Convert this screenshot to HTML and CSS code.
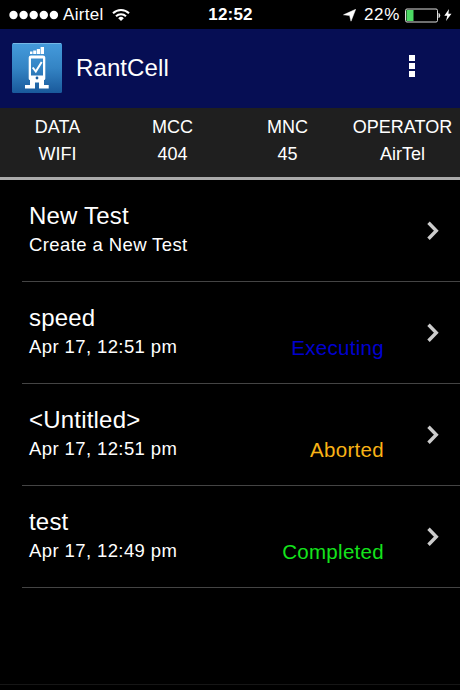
FILE: index.html
```html
<!DOCTYPE html>
<html>
<head>
    <meta charset="utf-8">
    <title>RantCell</title>
    <link rel="stylesheet" href="styles.css">
</head>
<body>
    <div class="status-bar">
        <div class="carrier">
            <svg class="dots" width="50" height="10" viewBox="0 0 50 10" fill="#fff">
                <circle cx="4.5" cy="5" r="4.2"/>
                <circle cx="14.6" cy="5" r="4.2"/>
                <circle cx="24.7" cy="5" r="4.2"/>
                <circle cx="34.8" cy="5" r="4.2"/>
                <circle cx="44.9" cy="5" r="4.2"/>
            </svg>
            <span class="network">Airtel</span>
            <svg class="wifi" width="18" height="14" viewBox="0 0 18 14" fill="none" stroke="#fff" stroke-width="2">
                <path d="M1 5.2a11.3 11.3 0 0 1 16 0"/>
                <path d="M4 8.3a7 7 0 0 1 10 0"/>
                <path d="M9 13L6.2 10.2a4 4 0 0 1 5.6 0z" fill="#fff" stroke="none"/>
            </svg>
        </div>
        <div class="clock">12:52</div>
        <div class="power">
            <svg width="13" height="13" viewBox="0 0 13 13" fill="#fff">
                <path d="M12.7 0.3L8 12.2L6.6 6.6L0.5 5.8z" stroke="#fff" stroke-width="0.5"/>
            </svg>
            <span class="percent">22%</span>
            <svg class="battery" width="36" height="15" viewBox="0 0 36 15">
                <rect x="0.5" y="1" width="32" height="13" rx="1.5" fill="none" stroke="#ddd"/>
                <rect x="1.5" y="2" width="7" height="11" fill="#4cd964"/>
                <path d="M33.5 5h.5q1.2 .8 1.2 2.5t-1.2 2.5h-.5z" fill="#ddd"/>
            </svg>
            <svg class="bolt" width="8" height="12" viewBox="0 0 8 12" fill="#fff">
                <path d="M5 0L0.3 6.8H3.3L2 12L7.5 4.8H4.4z"/>
            </svg>
        </div>
    </div>

    <div class="header">
        <svg class="logo" width="50" height="50" viewBox="0 0 50 50">
            <defs>
                <linearGradient id="sky" x1="0" y1="0" x2="0" y2="1">
                    <stop offset="0" stop-color="#459bdc"/>
                    <stop offset="0.5" stop-color="#3484c4"/>
                    <stop offset="1" stop-color="#19599b"/>
                </linearGradient>
            </defs>
            <rect width="50" height="50" rx="1.5" fill="url(#sky)"/>
            <path d="M1 0.5H49" stroke="#75b8e6" fill="none"/>
            <!-- signal bars -->
            <path d="M18 8.5h2.500v2.500h-2.500zM21.200 7.500h3v3.500h-3zM24.800 6h3.200v5h-3.200zM28.600 4h3.400v7h-3.400z" fill="#fff"/>
            <!-- phone with legs -->
            <path d="M19 12.500H31Q33.300 12.500 33.300 14.500V35.500Q33.300 37 32 37V42H36.700V45.500H27V39.500H23V45.500H13V42H18V37Q16.700 37 16.700 35.500V14.500Q16.700 12.500 19 12.500zM19 15.500V32.500H31V15.500z" fill="#fff" fill-rule="evenodd"/>
            <path d="M20.700 24.500L23.800 28.500L29.700 19" fill="none" stroke="#fff" stroke-width="2"/>
            <circle cx="25" cy="35" r="1.400" fill="#1d5f9f"/>
        </svg>
        <h1 class="app-name">RantCell</h1>
        <div class="menu">
            <span class="menu-dot"></span>
            <span class="menu-dot"></span>
            <span class="menu-dot"></span>
        </div>
    </div>

    <div class="info">
        <div class="info-item">DATA<br>WIFI</div>
        <div class="info-item">MCC<br>404</div>
        <div class="info-item">MNC<br>45</div>
        <div class="info-item">OPERATOR<br>AirTel</div>
    </div>

    <div class="tests">
        <div class="test">
            <div class="test-text">
                <div class="name">New Test</div>
                <div class="detail">Create a New Test</div>
            </div>
            <svg class="arrow" width="12" height="19" viewBox="0 0 12 19"><path d="M1.5 1.7L9.3 9.7L1.5 17.7"/></svg>
        </div>
        <div class="test">
            <div class="test-text">
                <div class="name">speed</div>
                <div class="detail">Apr 17, 12:51 pm</div>
            </div>
            <div class="state executing">Executing</div>
            <svg class="arrow" width="12" height="19" viewBox="0 0 12 19"><path d="M1.5 1.7L9.3 9.7L1.5 17.7"/></svg>
        </div>
        <div class="test">
            <div class="test-text">
                <div class="name">&lt;Untitled&gt;</div>
                <div class="detail">Apr 17, 12:51 pm</div>
            </div>
            <div class="state aborted">Aborted</div>
            <svg class="arrow" width="12" height="19" viewBox="0 0 12 19"><path d="M1.5 1.7L9.3 9.7L1.5 17.7"/></svg>
        </div>
        <div class="test">
            <div class="test-text">
                <div class="name">test</div>
                <div class="detail">Apr 17, 12:49 pm</div>
            </div>
            <div class="state completed">Completed</div>
            <svg class="arrow" width="12" height="19" viewBox="0 0 12 19"><path d="M1.5 1.7L9.3 9.7L1.5 17.7"/></svg>
        </div>
    </div>

    <div class="footer"></div>
</body>
</html>
```
FILE: styles.css
```css
* {
    box-sizing: border-box;
}
body {
    margin: 0;
    height: 690px;
    display: flex;
    flex-direction: column;
    background-color: #000;
    color: #fff;
    font-family: "Liberation Sans", Arial, sans-serif;
    overflow: hidden;
}
svg {
    display: block;
    flex: none;
}

/* Phone status bar */
.status-bar {
    height: 29px;
    display: grid;
    grid-template-columns: 1fr auto 1fr;
    align-items: center;
    padding: 1px 8px 0 9px;
    font-size: 17px;
    line-height: 28px;
}
.carrier, .power {
    display: flex;
    align-items: center;
}
.network {
    margin-left: 4px;
    letter-spacing: 0.3px;
}
.wifi {
    margin-left: 8px;
}
.clock {
    font-weight: bold;
    letter-spacing: 0.2px;
}
.power {
    justify-content: flex-end;
}
.percent {
    margin-left: 8px;
    letter-spacing: 0.7px;
}
.battery {
    margin-left: 5px;
}
.bolt {
    margin-left: 3px;
}

/* App header */
.header {
    height: 79px;
    display: flex;
    align-items: center;
    padding: 0 45px 2px 12px;
    background-color: #060e54; /* Navy */
}
.app-name {
    flex: 1;
    margin: 0 0 0 14px;
    font-size: 24px;
    font-weight: normal;
    line-height: 28px;
    letter-spacing: 0.1px;
}
.menu {
    display: flex;
    flex-direction: column;
    gap: 2px;
    margin-top: -3px;
}
.menu-dot {
    width: 6px;
    height: 6px;
    background-color: #fff;
}

/* Network details */
.info {
    height: 72px;
    display: grid;
    grid-template-columns: repeat(4, 115px);
    padding-top: 6px;
    background-color: #1f1f1f;
    border-bottom: 3px solid #aaa;
}
.info-item {
    font-size: 18px;
    line-height: 27px;
    text-align: center;
}

/* List of tests */
.tests {
    flex: 1;
    padding-left: 22px;
}
.test {
    height: 102px;
    display: flex;
    align-items: center;
    padding: 0 21px 0 7px;
    border-bottom: 1px solid #444;
}
.test-text {
    flex: 1;
    padding-bottom: 2px;
}
.name {
    font-size: 24px;
    line-height: 30px;
    letter-spacing: 0.2px;
}
.detail {
    font-size: 18.5px;
    line-height: 28px;
    letter-spacing: 0.4px;
}
.state {
    align-self: flex-end;
    margin-bottom: 21px;
    font-size: 20.5px;
    line-height: 28px;
    letter-spacing: 0.3px;
}
.executing {
    color: #0000d0;
}
.aborted {
    color: #f9b316;
}
.completed {
    color: #14e41c;
}
.arrow {
    margin-left: 43px;
    fill: none;
    stroke: #ccc;
    stroke-width: 3.4;
}

.footer {
    height: 6px;
    border-top: 1px solid #161616;
}
```
